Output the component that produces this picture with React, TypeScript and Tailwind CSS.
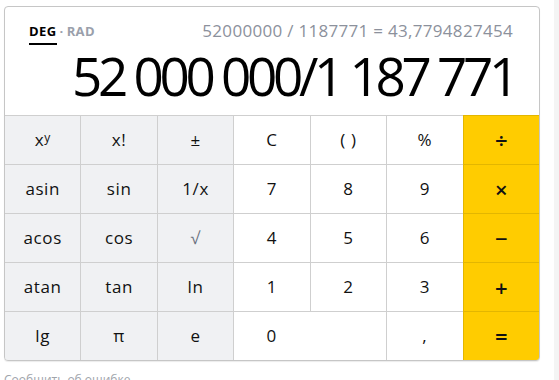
import React from "react";

type Key = {
  label: React.ReactNode;
  tone: "gray" | "white" | "yellow";
  wide?: boolean;
};

const g = (label: React.ReactNode): Key => ({ label, tone: "gray" });
const w = (label: React.ReactNode): Key => ({ label, tone: "white" });
const y = (label: React.ReactNode): Key => ({ label, tone: "yellow" });

const keys: Key[] = [
  g(
    <span>
      x<sup className="relative -top-[4px] text-[12px]">y</sup>
    </span>
  ),
  g("x!"),
  g("±"),
  w("C"),
  w("( )"),
  w("%"),
  y("÷"),
  g("asin"),
  g("sin"),
  g("1/x"),
  w("7"),
  w("8"),
  w("9"),
  y("×"),
  g("acos"),
  g("cos"),
  g(<span className="text-[#6b7280]">√</span>),
  w("4"),
  w("5"),
  w("6"),
  y("−"),
  g("atan"),
  g("tan"),
  g("ln"),
  w("1"),
  w("2"),
  w("3"),
  y("+"),
  g("lg"),
  g("π"),
  g("e"),
  { label: "0", tone: "white", wide: true },
  w(","),
  y("="),
];

export default function App() {
  return (
    <div className="flex h-[380px] w-[559px] overflow-hidden bg-white font-['Open_Sans',sans-serif]">
      <div className="flex-1 pl-[4px] pt-[6px]">
        <div className="w-[536px] overflow-hidden rounded-[4px] border border-[#c6c6c6] bg-white shadow-[0_1px_1px_rgba(0,0,0,0.08)]">
          {/* Display */}
          <div className="h-[108px] px-[24px] pt-[15px]">
            <div className="flex items-start justify-between">
              <div className="flex items-center gap-[3px] text-[13px] font-bold tracking-[0.4px]">
                <span className="border-b-2 border-black pb-[1px] text-black">DEG</span>
                <span className="pb-[3px] text-[#9aa0ab]">·</span>
                <span className="pb-[3px] text-[#9aa0ab]">RAD</span>
              </div>
              <div className="-mt-[2px] pr-[2px] text-[17px] leading-[22px] tracking-[0.3px] text-[#8c919c]">
                52000000 / 1187771 = 43,7794827454
              </div>
            </div>
            <div className="mt-[1px] text-right text-[53px] leading-[60px] tracking-[-4.3px] text-black">
              52 000 000/1 187 771
            </div>
          </div>

          {/* Keypad */}
          <div className="grid grid-cols-7 gap-px border-t border-[#cfcfcf] bg-[#cfcfcf]">
            {keys.map((k, i) => (
              <button
                key={i}
                className={
                  "flex h-[48px] items-center text-[#111] " +
                  (k.wide ? "col-span-2 " : "justify-center ") +
                  (k.tone === "gray"
                    ? "bg-[#f0f1f3] text-[17px] tracking-[0.6px]"
                    : k.tone === "white"
                    ? "bg-white text-[17px] tracking-[0.6px]"
                    : "bg-[#ffcc00] text-[22px] font-semibold outline outline-1 outline-[#e3b600]")
                }
              >
                {k.wide ? (
                  <span className="w-[75px] text-center">{k.label}</span>
                ) : (
                  k.label
                )}
              </button>
            ))}
          </div>
        </div>
        <div className="mt-[10px] text-[12px] text-[#a0a4ab]">Сообщить об ошибке</div>
      </div>
      <div className="w-[5px] bg-[#f4f4f4]" />
    </div>
  );
}
